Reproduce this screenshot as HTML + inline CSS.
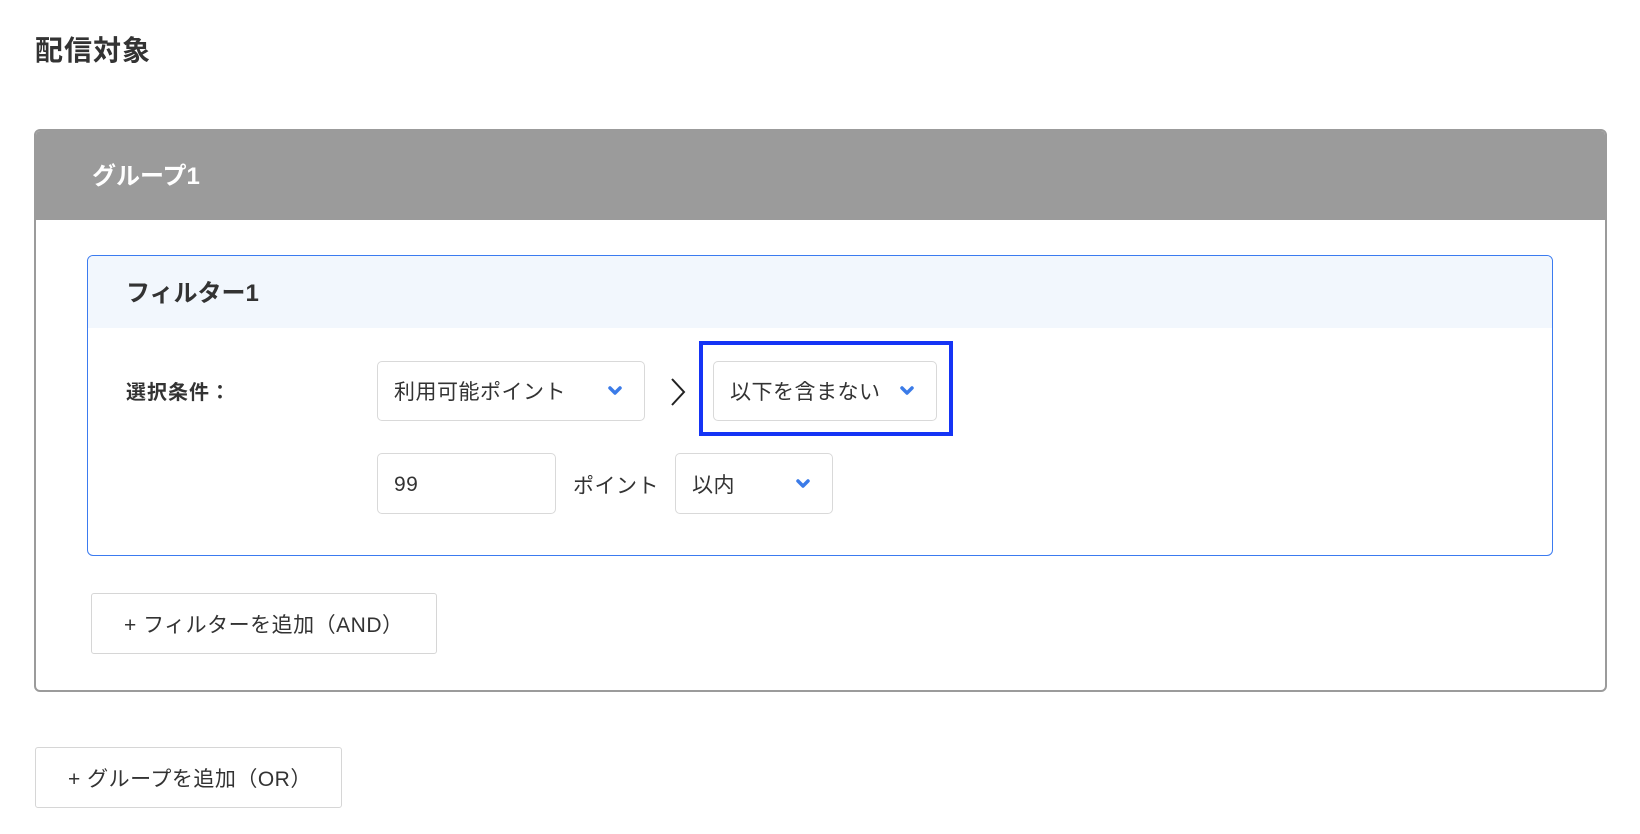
<!DOCTYPE html>
<html><head><meta charset="utf-8"><style>
*{box-sizing:border-box;margin:0;padding:0}
body{width:1640px;height:834px;background:#fff;font-family:"Liberation Sans","Noto Sans CJK JP",sans-serif;color:#333;position:relative;overflow:hidden}
.a{position:absolute}
.sel{position:absolute;border:1px solid #d9d9d9;border-radius:5px;background:#fff;font-size:21px;letter-spacing:0.5px;color:#333;display:flex;align-items:center;padding-left:16px}
.chev{position:absolute;top:50%;margin-top:-5px}
.btn{position:absolute;border:1px solid #d6d6d6;border-radius:3px;background:#fff;font-size:21px;letter-spacing:0.5px;display:flex;align-items:center;color:#333}
</style></head><body>
<div class="a" style="left:35px;top:29px;font-size:28px;font-weight:bold;color:#333;letter-spacing:1px">配信対象</div>
<div class="a" style="left:34px;top:129px;width:1573px;height:563px;border:2px solid #9b9b9b;border-radius:6px;overflow:hidden">
  <div style="height:89px;background:#9b9b9b;color:#fff;font-size:24px;font-weight:bold;padding:25px 0 0 56px">グループ1</div>
</div>
<div class="a" style="left:87px;top:255px;width:1466px;height:301px;border:1px solid #3b7bf0;border-radius:6px;overflow:hidden">
  <div style="height:72px;background:#f2f7fd;font-size:24px;font-weight:bold;padding:17px 0 0 38px;color:#333">フィルター1</div>
</div>
<div class="a" style="left:126px;top:376px;font-size:20px;font-weight:bold;letter-spacing:1px">選択条件：</div>
<div class="sel" style="left:377px;top:361px;width:268px;height:60px">利用可能ポイント
<svg class="chev" style="right:22px" width="14" height="10" viewBox="0 0 14 10"><path d="M2 2l5 5 5-5" stroke="#3b7be8" stroke-width="3.5" fill="none" stroke-linecap="round" stroke-linejoin="round"/></svg></div>
<svg class="a" style="left:669px;top:377px" width="18" height="30" viewBox="0 0 18 30"><path d="M3 2l12 13-12 13" stroke="#222" stroke-width="2" fill="none"/></svg>
<div class="a" style="left:699px;top:341px;width:254px;height:95px;border:4px solid #1534f5"></div>
<div class="sel" style="left:713px;top:361px;width:224px;height:60px">以下を含まない
<svg class="chev" style="right:22px" width="14" height="10" viewBox="0 0 14 10"><path d="M2 2l5 5 5-5" stroke="#3b7be8" stroke-width="3.5" fill="none" stroke-linecap="round" stroke-linejoin="round"/></svg></div>
<div class="sel" style="left:377px;top:453px;width:179px;height:61px;padding-top:3px">99</div>
<div class="a" style="left:573px;top:470px;font-size:21px;letter-spacing:0.5px">ポイント</div>
<div class="sel" style="left:675px;top:453px;width:158px;height:61px">以内
<svg class="chev" style="right:22px" width="14" height="10" viewBox="0 0 14 10"><path d="M2 2l5 5 5-5" stroke="#3b7be8" stroke-width="3.5" fill="none" stroke-linecap="round" stroke-linejoin="round"/></svg></div>
<div class="btn" style="left:91px;top:593px;width:346px;height:61px;padding-left:32px">+ フィルターを追加（AND）</div>
<div class="btn" style="left:35px;top:747px;width:307px;height:61px;padding-left:32px">+ グループを追加（OR）</div>
</body></html>
